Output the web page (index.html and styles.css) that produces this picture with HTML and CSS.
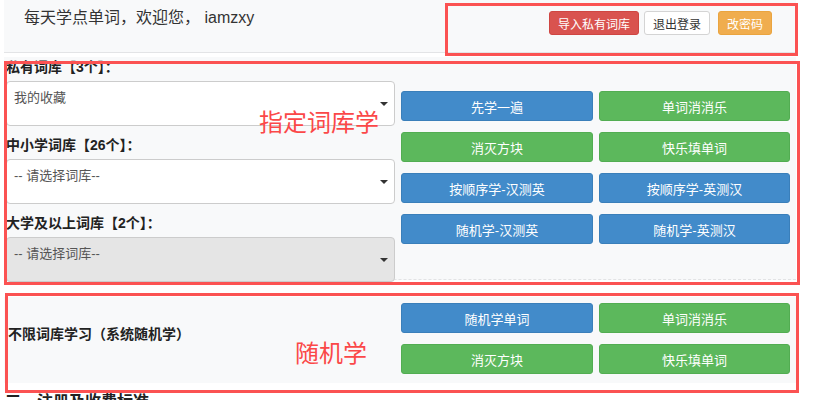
FILE: index.html
```html
<!DOCTYPE html>
<html lang="zh-CN">

<head>
  <meta charset="utf-8" />
  <meta name="viewport" content="width=device-width, initial-scale=1" />

  <title>每天学点单词</title>

  <link rel="stylesheet" href="styles.css">
</head>

<body>
  <div id="page">
    <div class="topbar">
      <span class="welcome">每天学点单词，欢迎您， iamzxy</span>
      <div class="actions">
        <button type="button" class="btn btn-danger">导入私有词库</button>
        <button type="button" class="btn btn-default">退出登录</button>
        <button type="button" class="btn btn-warning">改密码</button>
      </div>
    </div>

    <div class="panel pick">
      <div class="libs">
        <b class="label">私有词库【3个】：</b>
        <div class="select">我的收藏<i class="caret"></i></div>

        <b class="label">中小学词库【26个】：</b>
        <div class="select">-- 请选择词库--<i class="caret"></i></div>

        <b class="label">大学及以上词库【2个】：</b>
        <div class="select disabled">-- 请选择词库--<i class="caret"></i></div>
      </div>

      <div class="modes">
        <button type="button" class="btn btn-primary">先学一遍</button>
        <button type="button" class="btn btn-success">单词消消乐</button>
        <button type="button" class="btn btn-success">消灭方块</button>
        <button type="button" class="btn btn-success">快乐填单词</button>
        <button type="button" class="btn btn-primary">按顺序学-汉测英</button>
        <button type="button" class="btn btn-primary">按顺序学-英测汉</button>
        <button type="button" class="btn btn-primary">随机学-汉测英</button>
        <button type="button" class="btn btn-primary">随机学-英测汉</button>
      </div>
    </div>

    <div class="panel random">
      <b class="label">不限词库学习（系统随机学）</b>
      <div class="modes">
        <button type="button" class="btn btn-primary">随机学单词</button>
        <button type="button" class="btn btn-success">单词消消乐</button>
        <button type="button" class="btn btn-success">消灭方块</button>
        <button type="button" class="btn btn-success">快乐填单词</button>
      </div>
    </div>

    <h3 class="section-title">三、注册及收费标准</h3>
  </div>

  <!-- red call-out frames and captions -->
  <div class="mark mark-actions"></div>
  <div class="mark mark-pick"></div>
  <div class="mark mark-random"></div>
  <span class="note note-pick">指定词库学</span>
  <span class="note note-random">随机学</span>
</body>

</html>
```

FILE: styles.css
```css
body {
  margin: 0;
  font-family: "Liberation Sans", "Noto Sans CJK SC", sans-serif;
  font-size: 13px;
  color: #333;
  background: #fff;
  overflow: hidden;
  line-height: 1;
}

#page {
  width: 792px;
  margin-left: 4px;
}

.topbar {
  height: 53px;
  box-sizing: border-box;
  display: flex;
  justify-content: space-between;
  align-items: flex-start;
  padding: 0 24px 0 20px;
  background: #f8f9fa;
  border-bottom: 1px solid #e3e4e6;
}

.welcome {
  font-size: 16px;
  line-height: 20px;
  margin-top: 8px;
}

.actions {
  display: flex;
  margin-top: 11px;
}

.actions .btn {
  height: 24px;
  padding: 0 8px;
  margin-left: 5px;
  font-size: 12px;
}

.actions .btn-warning {
  margin-left: 8px;
}

.btn {
  font-family: inherit;
  font-size: 13px;
  color: #fff;
  border: 1px solid transparent;
  border-radius: 3px;
  cursor: pointer;
}

.btn-primary {
  background: #428bca;
  border-color: #3a7fba;
}

.btn-success {
  background: #5cb85c;
  border-color: #52ad52;
}

.btn-danger {
  background: #d9534f;
  border-color: #cf4642;
}

.btn-warning {
  background: #f0ad4e;
  border-color: #eaa43f;
}

.btn-default {
  background: #fff;
  border-color: #d4d4d4;
  color: #333;
}

.panel {
  display: flex;
  background: #f8f9fa;
}

.label {
  display: block;
  font-size: 14px;
  line-height: 18px;
  color: #222;
}

.pick {
  margin-top: 4px;
  padding: 0 6px 0 2px;
  border-bottom: 1px dashed #e2e3e5;
}

/* the last select hangs a little over the dashed rule */
.libs {
  width: 389px;
  flex: none;
  margin-bottom: -3px;
}

.libs .label {
  margin-top: 10px;
  margin-bottom: 5px;
}

.libs .label:first-child {
  margin-top: 1px;
}

.select {
  position: relative;
  height: 45px;
  box-sizing: border-box;
  padding: 8px 7px 0;
  font-size: 13px;
  line-height: 15px;
  color: #555;
  background: #fff;
  border: 1px solid #ccc;
  border-radius: 4px;
}

.select.disabled {
  background: #e5e5e5;
}

.caret {
  position: absolute;
  right: 6px;
  top: 20px;
  width: 0;
  height: 0;
  border-left: 4px solid transparent;
  border-right: 4px solid transparent;
  border-top: 4px solid #333;
}

.modes {
  flex: 1;
  display: grid;
  grid-template-columns: 192px 191px;
  grid-auto-rows: 30px;
  column-gap: 6px;
  row-gap: 11px;
  align-content: start;
  margin-left: 6px;
}

.pick .modes {
  padding-top: 34px;
}

.random {
  margin-top: 17px;
  height: 86px;
  padding: 6px 6px 0 4px;
  box-sizing: border-box;
  align-items: flex-start;
}

.random .label {
  width: 389px;
  flex: none;
  margin-top: 22px;
}

.random .modes {
  margin-left: 4px;
}

.section-title {
  margin: 9px 0 0 1px;
  font-size: 16px;
  line-height: 20px;
  font-weight: bold;
  color: #222;
}

.mark {
  position: absolute;
  border: 3px solid #fb5252;
  box-sizing: border-box;
}

.mark-actions {
  left: 445px;
  top: 3px;
  width: 353px;
  height: 53px;
}

.mark-pick {
  left: 4px;
  top: 61px;
  width: 796px;
  height: 224px;
}

.mark-random {
  left: 5px;
  top: 293px;
  width: 794px;
  height: 100px;
}

.note {
  position: absolute;
  font-family: "Noto Sans CJK SC", sans-serif;
  font-size: 24px;
  line-height: 30px;
  color: #fb4848;
}

.note-pick {
  left: 259px;
  top: 106px;
}

.note-random {
  left: 295px;
  top: 337px;
}
```
